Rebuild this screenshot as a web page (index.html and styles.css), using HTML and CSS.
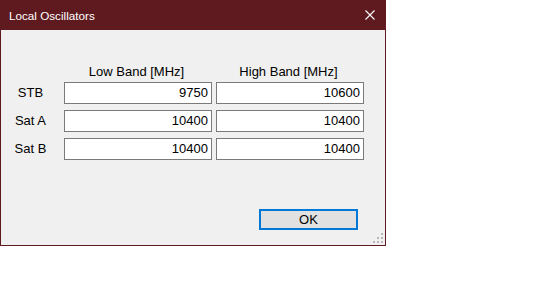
FILE: index.html
```html
<!DOCTYPE html>
<html>
<head>
<meta charset="utf-8">
<link rel="stylesheet" href="styles.css">
</head>
<body>
<div class="window">
  <div class="titlebar">
    <span class="title">Local Oscillators</span>
    <span class="close">
      <svg width="10" height="10" viewBox="0 0 10 10"><path d="M0.5 0.5L9.5 9.5M9.5 0.5L0.5 9.5" stroke="#fff" stroke-width="1.1" fill="none"/></svg>
    </span>
  </div>
  <div class="content">
    <div class="cols head">
      <span></span>
      <span class="colhead">Low Band [MHz]</span>
      <span class="colhead">High Band [MHz]</span>
    </div>
    <div class="cols rows">
      <span class="rowlabel">STB</span>
      <span class="field">9750</span>
      <span class="field">10600</span>
      <span class="rowlabel">Sat A</span>
      <span class="field">10400</span>
      <span class="field">10400</span>
      <span class="rowlabel">Sat B</span>
      <span class="field">10400</span>
      <span class="field">10400</span>
    </div>
    <div class="actions">
      <button class="ok">OK</button>
    </div>
  </div>
  <svg class="grip" width="12" height="12" viewBox="0 0 12 12">
    <rect x="9" y="1" width="2" height="2" fill="#b8b8b8"/>
    <rect x="5" y="5" width="2" height="2" fill="#b8b8b8"/>
    <rect x="9" y="5" width="2" height="2" fill="#b8b8b8"/>
    <rect x="1" y="9" width="2" height="2" fill="#b8b8b8"/>
    <rect x="5" y="9" width="2" height="2" fill="#b8b8b8"/>
    <rect x="9" y="9" width="2" height="2" fill="#b8b8b8"/>
  </svg>
</div>
</body>
</html>
```
FILE: styles.css
```css
body {
  margin: 0;
  background: #ffffff;
}
.window {
  position: relative;
  width: 386px;
  height: 246px;
  box-sizing: border-box;
  border: 1px solid #5f1a1f;
  border-top: none;
  background: #f0f0f0;
  display: flex;
  flex-direction: column;
  font-family: "Liberation Sans", Arial, sans-serif;
  color: #000;
}
.titlebar {
  height: 30px;
  flex: none;
  background: #5f1a1f;
  display: flex;
  align-items: center;
  justify-content: space-between;
  padding-left: 8px;
  color: #fff;
  font-size: 11.7px;
}
.close {
  width: 30px;
  height: 30px;
  display: flex;
  align-items: center;
  justify-content: center;
}
.content {
  flex: 1;
  padding: 34px 27px 15px 0;
  display: flex;
  flex-direction: column;
  font-size: 13px;
}
.cols {
  display: grid;
  grid-template-columns: 59px 148px 148px;
  column-gap: 4px;
}
.head {
  margin-bottom: 3px;
  line-height: 15px;
}
.colhead {
  text-align: center;
  padding-right: 3px;
}
.rows {
  row-gap: 6px;
}
.rowlabel {
  text-align: center;
  line-height: 22px;
}
.field {
  height: 22px;
  box-sizing: border-box;
  border: 1px solid #7a7a7a;
  background: #fff;
  text-align: right;
  padding-right: 3px;
  line-height: 20px;
}
.actions {
  margin-top: auto;
  display: flex;
  justify-content: flex-end;
}
.ok {
  width: 99px;
  height: 21px;
  box-sizing: border-box;
  border: 2px solid #0078d7;
  background: #e1e1e1;
  font-family: "Liberation Sans", Arial, sans-serif;
  font-size: 13px;
  color: #000;
  padding: 0;
  margin: 0;
}
.grip {
  position: absolute;
  right: 1px;
  bottom: 1px;
}
```
